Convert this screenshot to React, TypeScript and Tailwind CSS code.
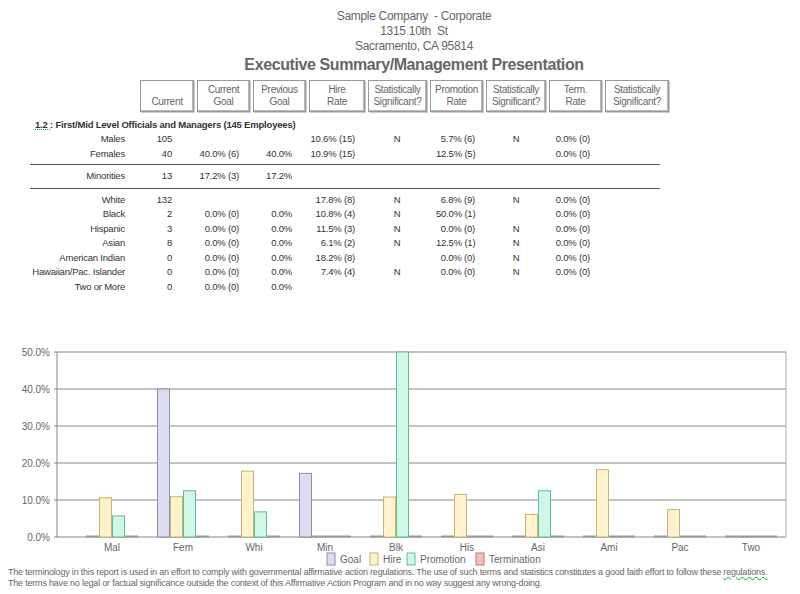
import React from "react";

const cols = "grid grid-cols-[128px_47px_67px_53px_63px_78px_42px_76px_39px]";
type Row = string[];
const top: Row[] = [
  ["Males", "105", "", "", "10.6% (15)", "N", "5.7% (6)", "N", "0.0% (0)"],
  ["Females", "40", "40.0% (6)", "40.0%", "10.9% (15)", "", "12.5% (5)", "", "0.0% (0)"],
];
const mid: Row[] = [["Minorities", "13", "17.2% (3)", "17.2%", "", "", "", "", ""]];
const bot: Row[] = [
  ["White", "132", "", "", "17.8% (8)", "N", "6.8% (9)", "N", "0.0% (0)"],
  ["Black", "2", "0.0% (0)", "0.0%", "10.8% (4)", "N", "50.0% (1)", "", "0.0% (0)"],
  ["Hispanic", "3", "0.0% (0)", "0.0%", "11.5% (3)", "N", "0.0% (0)", "N", "0.0% (0)"],
  ["Asian", "8", "0.0% (0)", "0.0%", "6.1% (2)", "N", "12.5% (1)", "N", "0.0% (0)"],
  ["American Indian", "0", "0.0% (0)", "0.0%", "18.2% (8)", "", "0.0% (0)", "N", "0.0% (0)"],
  ["Hawaiian/Pac. Islander", "0", "0.0% (0)", "0.0%", "7.4% (4)", "N", "0.0% (0)", "N", "0.0% (0)"],
  ["Two or More", "0", "0.0% (0)", "0.0%", "", "", "", "", ""],
];

function DataRow({ r }: { r: Row }) {
  return (
    <div className={`${cols} h-[14.5px] items-center whitespace-nowrap tracking-[-0.2px]`}>
      {r.map((c, i) => (
        <div key={i} className={i === 5 || i === 7 ? "text-center" : "text-right pr-[3px]"}>
          {c}
        </div>
      ))}
    </div>
  );
}

const headers: [string, string, number][] = [
  ["", "Current", 54], ["Current", "Goal", 53], ["Previous", "Goal", 53], ["Hire", "Rate", 56],
  ["Statistically", "Significant?", 59], ["Promotion", "Rate", 53], ["Statistically", "Significant?", 60],
  ["Term.", "Rate", 53], ["Statistically", "Significant?", 64],
];

const cats = ["Mal", "Fem", "Whi", "Min", "Blk", "His", "Asi", "Ami", "Pac", "Two"];
const data: [number, number, number][] = [
  [0, 10.6, 5.7], [40, 10.9, 12.5], [0, 17.8, 6.8], [17.2, 0, 0], [0, 10.8, 50],
  [0, 11.5, 0], [0, 6.1, 12.5], [0, 18.2, 0], [0, 7.4, 0], [0, 0, 0],
];
const fills = [["#dcdcf0", "#8e8eb0"], ["#fff2cc", "#c9b274"], ["#cff7e6", "#5fbf93"], ["#f7bcbc", "#c07070"]];

function Chart() {
  const y0 = 537, k = 3.7;
  return (
    <svg width="800" height="227" viewBox="0 340 800 227" className="block">
      {[0, 10, 20, 30, 40, 50].map((v) => (
        <g key={v}>
          <line x1={54} x2={786} y1={y0 - v * k} y2={y0 - v * k} stroke="#888" strokeWidth={v === 0 ? 1.2 : 1} />
          <text x={50} y={y0 - v * k + 3.5} textAnchor="end" fontSize="10" fill="#666" fontFamily="Liberation Sans, Arial, sans-serif">{v.toFixed(1)}%</text>
        </g>
      ))}
      <line x1={57} x2={57} y1={352} y2={y0} stroke="#888" />
      <line x1={786} x2={786} y1={352} y2={y0} stroke="#aaa" />
      {cats.map((c, i) => {
        const cx = 112 + 71 * i;
        const x = cx - 26;
        return (
          <g key={c}>
            <rect x={x} y={y0 - 1.5} width={52} height={2} fill="#999" />
            {data[i].map((v, j) =>
              v > 0 ? (
                <rect key={j} x={x + j * 13 + 0.5} y={y0 - v * k} width={12} height={v * k} fill={fills[j][0]} stroke={fills[j][1]} strokeWidth={1} />
              ) : null
            )}
            <text x={cx} y={551} textAnchor="middle" fontSize="10" fill="#666" fontFamily="Liberation Sans, Arial, sans-serif">{c}</text>
          </g>
        );
      })}
      {[["Goal", 327], ["Hire", 370], ["Promotion", 407], ["Termination", 476]].map(([t, x], j) => (
        <g key={t as string}>
          <rect x={(x as number)} y={553} width={8} height={12} fill={fills[j][0]} stroke={fills[j][1]} />
          <text x={(x as number) + 13} y={563} fontSize="10" fill="#666" fontFamily="Liberation Sans, Arial, sans-serif">{t}</text>
        </g>
      ))}
    </svg>
  );
}

export default function App() {
  return (
    <div className="w-[800px] h-[594px] bg-white overflow-hidden text-[#333]" style={{ fontFamily: "'Liberation Sans', Arial, sans-serif" }}>
      <div className="h-[340px]">
        <div className="pl-[28px] pt-[9px] text-center text-[#666] text-[12px] leading-[15px] tracking-[-0.3px]">
          <div>Sample Company&nbsp; - Corporate</div>
          <div>1315 10th&nbsp; St</div>
          <div>Sacramento, CA 95814</div>
          <div className="text-[16px] font-bold leading-[20px] mt-[1px] tracking-[-0.4px]">Executive Summary/Management Presentation</div>
        </div>
        <div className="flex gap-[3px] ml-[140px] mt-[5px]">
          {headers.map(([a, b, w], i) => (
            <div key={i} style={{ width: w }} className="h-[32px] border border-[#999] shadow-[inset_-1px_-1px_0_#bbb,1px_1px_0_#ccc] flex flex-col justify-end items-center pb-[3px] text-[10px] leading-[12px] text-[#666] tracking-[-0.3px]">
              <div>{a}</div>
              <div>{b}</div>
            </div>
          ))}
        </div>
        <div className="text-[9.5px] mt-[6px]">
          <div className="pl-[35px] font-bold text-[9.5px] h-[14px] tracking-[-0.2px]">
            <span className="underline decoration-dotted decoration-green-600">1.2 </span>: First/Mid Level Officials and Managers (145 Employees)
          </div>
          {top.map((r, i) => <DataRow key={i} r={r} />)}
          <div className="ml-[30px] w-[630px] border-t border-[#555] mt-[3px] mb-[4px]" />
          {mid.map((r, i) => <DataRow key={i} r={r} />)}
          <div className="ml-[30px] w-[630px] border-t border-[#555] mt-[4px] mb-[4px]" />
          {bot.map((r, i) => <DataRow key={i} r={r} />)}
        </div>
      </div>
      <Chart />
      <div className="ml-[8px] w-[762px] text-[9px] leading-[11px] text-[#666] tracking-[-0.2px]">
        The terminology in this report is used in an effort to comply with governmental affirmative action regulations. The use of such terms and statistics constitutes a good faith effort to follow these <span className="underline decoration-wavy decoration-green-600">regulations.</span> The terms have no legal or factual significance outside the context of this Affirmative Action Program and in no way suggest any wrong-doing.
      </div>
    </div>
  );
}
